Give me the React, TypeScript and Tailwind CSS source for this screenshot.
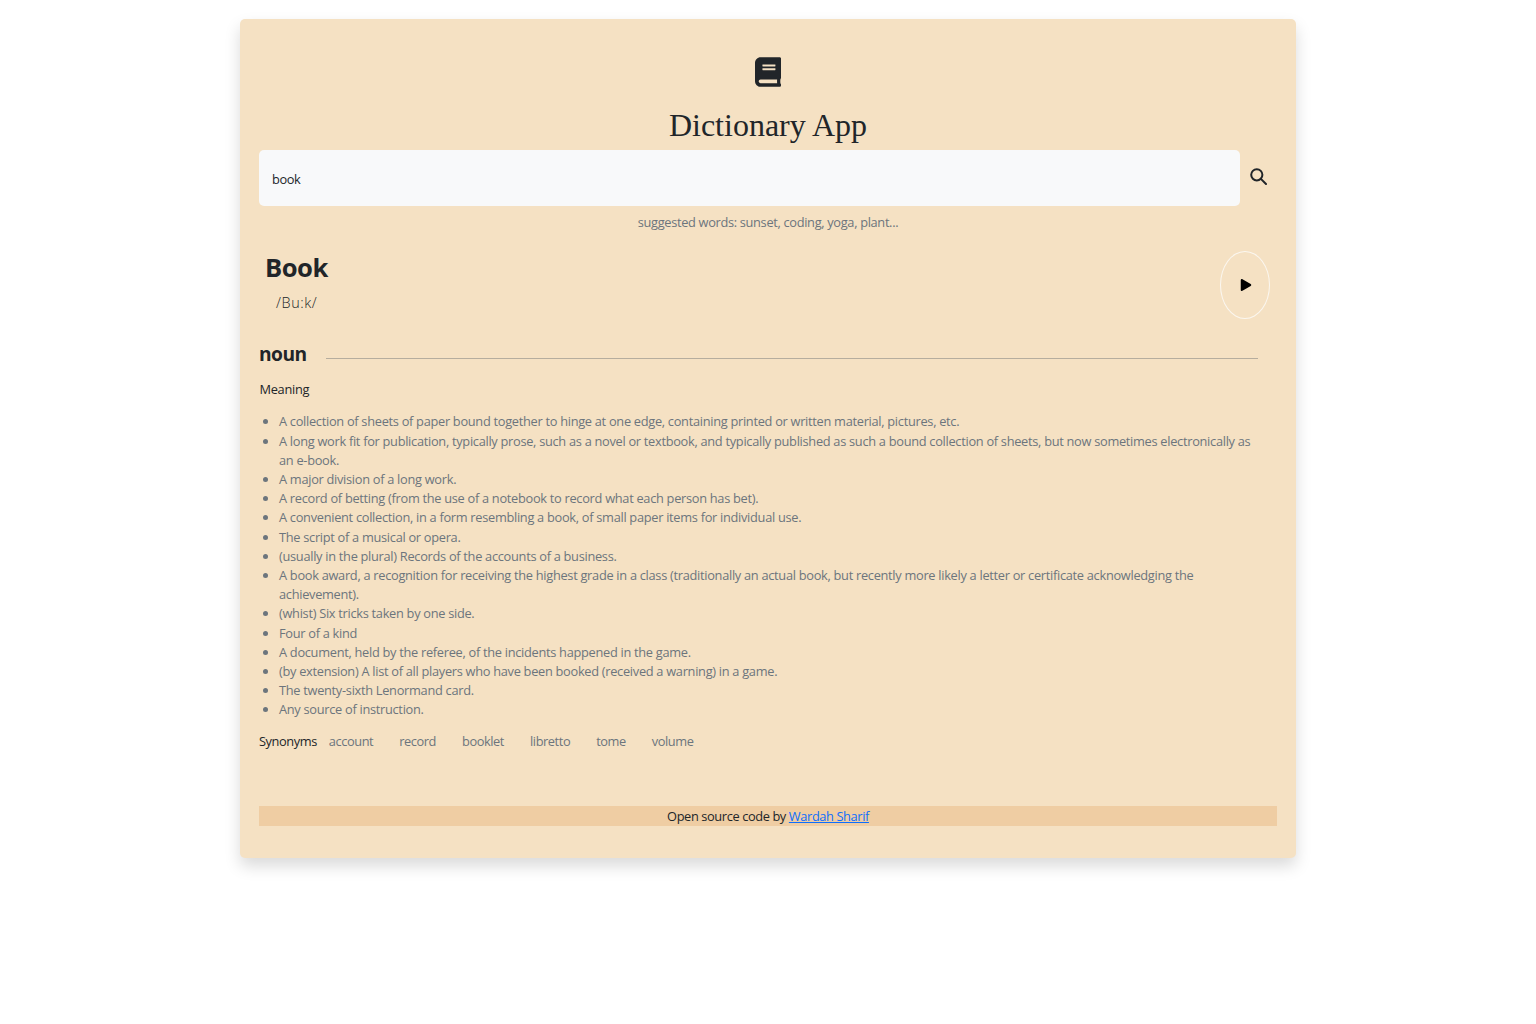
import React from "react";
import { FaBook, FaPlay } from "react-icons/fa";

const meanings = [
  "A collection of sheets of paper bound together to hinge at one edge, containing printed or written material, pictures, etc.",
  "A long work fit for publication, typically prose, such as a novel or textbook, and typically published as such a bound collection of sheets, but now sometimes electronically as an e-book.",
  "A major division of a long work.",
  "A record of betting (from the use of a notebook to record what each person has bet).",
  "A convenient collection, in a form resembling a book, of small paper items for individual use.",
  "The script of a musical or opera.",
  "(usually in the plural) Records of the accounts of a business.",
  "A book award, a recognition for receiving the highest grade in a class (traditionally an actual book, but recently more likely a letter or certificate acknowledging the achievement).",
  "(whist) Six tricks taken by one side.",
  "Four of a kind",
  "A document, held by the referee, of the incidents happened in the game.",
  "(by extension) A list of all players who have been booked (received a warning) in a game.",
  "The twenty-sixth Lenormand card.",
  "Any source of instruction.",
];

const synonyms = ["account", "record", "booklet", "libretto", "tome", "volume"];

export default function App() {
  return (
    <div className="min-h-[1024px] bg-white pt-[19px] font-['Open_Sans',sans-serif] text-[12.8px] leading-[19.2px] tracking-[-0.42px] text-[#212529]">
      <div className="mx-auto h-[839px] w-[1056px] rounded-[5px] bg-[#f5e1c3] p-[19px] shadow-[0_8px_16px_rgba(0,0,0,0.15)]">
        <header className="flex flex-col items-center pt-[19px]">
          <FaBook className="h-[30px] w-[26px] text-[#212529]" />
          <h1 className="mt-[19px] h-[44px] font-['Liberation_Serif',serif] text-[32px] leading-[38px] tracking-normal">
            Dictionary App
          </h1>
        </header>

        <div className="flex items-center">
          <div className="flex h-[56px] w-[981px] items-center rounded-[5px] bg-[#f8f9fa] px-[13px] pt-[3px]">
            book
          </div>
          <svg className="mb-[3px] ml-[10px] h-[17px] w-[17px] text-[#212529]" viewBox="0 0 17 17" fill="none" stroke="currentColor" strokeWidth="2">
            <circle cx="6.8" cy="6.8" r="5.6" />
            <path d="M10.9 10.9L16 16" strokeLinecap="round" />
          </svg>
        </div>
        <p className="mt-[7px] text-center tracking-[-0.32px] text-[#6c757d]">
          suggested words: sunset, coding, yoga, plant...
        </p>

        <section className="mt-[19px] flex items-start justify-between pr-[7px]">
          <div className="pl-[6px]">
            <h2 className="mt-[2px] text-[25.6px] leading-[30px] font-bold tracking-[-0.5px]">Book</h2>
            <p className="mt-[10px] pl-[11px] text-[14.4px] leading-[20px] font-light tracking-[0.6px]">/Bu:k/</p>
          </div>
          <button className="flex h-[68px] w-[50px] items-center justify-center rounded-[50%] border border-[#fbf7f0] pl-[1px] text-black">
            <FaPlay className="h-[12px] w-[12px]" />
          </button>
        </section>

        <section className="mt-[22px]">
          <div className="flex items-center pr-[19px]">
            <h3 className="text-[19.2px] leading-[26px] font-bold tracking-[-0.55px]">noun</h3>
            <div className="mt-[8px] ml-[19px] h-px flex-1 bg-[#b6ad9e]" />
          </div>
          <h4 className="mt-[13px] pl-[0.5px] leading-[19px] font-medium tracking-[-0.3px]">Meaning</h4>
          <ul className="mt-[13.2px] list-disc pr-[19px] pl-[20px] tracking-[-0.29px] text-[#6c757d] marker:text-[#6c757d]">
            {meanings.map((m) => (
              <li key={m}>{m}</li>
            ))}
          </ul>
          <div className="mt-[12.8px] flex">
            <span className="mr-[12px]">Synonyms</span>
            <div className="flex gap-[26px] text-[#6c757d]">
              {synonyms.map((s) => (
                <span key={s}>{s}</span>
              ))}
            </div>
          </div>
        </section>

        <footer className="mt-[54px] h-[20px] bg-[#efcda3] pt-[1px] text-center tracking-[-0.38px]">
          Open source code by{" "}
          <a href="#" className="text-[#0d6efd] underline">
            Wardah Sharif
          </a>
        </footer>
      </div>
    </div>
  );
}
